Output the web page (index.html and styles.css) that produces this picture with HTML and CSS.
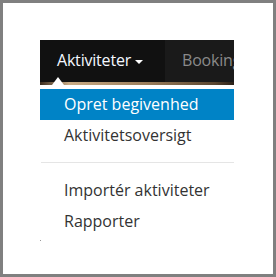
FILE: index.html
```html
<!DOCTYPE html>
<html lang="da">
  <head>
    <meta charset="UTF-8" />
    <title>Aktiviteter</title>
    <link rel="stylesheet" href="styles.css">
  </head>
  <body>
    <div class="frame">
      <div class="menu">
        <div class="navbar">
          <div class="nav-item active">Aktiviteter <span class="caret"></span></div>
          <div class="nav-item">Booking</div>
        </div>
        <div class="nav-edge"></div>
        <div class="dropdown">
          <span class="pointer"></span>
          <div class="dropdown-item selected">Opret begivenhed</div>
          <div class="dropdown-item">Aktivitetsoversigt</div>
          <div class="divider"></div>
          <div class="dropdown-item">Importér aktiviteter</div>
          <div class="dropdown-item">Rapporter</div>
          <span class="dot"></span>
        </div>
      </div>
    </div>
  </body>
</html>
```

FILE: styles.css
```css
body {
  margin: 0;
  padding: 0;
  background-color: #fff;
  font-family: "Open Sans", Arial, sans-serif;
}

.frame {
  box-sizing: border-box;
  width: 276px;
  height: 277px;
  border: 3px solid #808080;
  padding: 37px 0 0 37px;
}

.menu {
  width: 194px;
}

.navbar {
  display: flex;
  height: 42px;
  background-color: #111;
  overflow: hidden;
}

.nav-item {
  flex-shrink: 0;
  padding: 0 0 0 17px;
  line-height: 40px;
  font-size: 16px;
  letter-spacing: -0.2px;
  color: #8a8a8a;
  background-color: #1a1a1a;
  white-space: nowrap;
}

.nav-item.active {
  width: 108px;
  padding-left: 17px;
  color: #f4f8ff;
  background-color: #111;
}

.caret {
  display: inline-block;
  width: 0;
  height: 0;
  margin-left: 0;
  vertical-align: middle;
  border-top: 4px solid #fff;
  border-left: 4px solid transparent;
  border-right: 4px solid transparent;
}

.nav-edge {
  height: 3px;
  background: linear-gradient(to right, #3a2c1e, #c9ac86 15%, #9a7e5c 55%, #5a4630 90%, #2a2018);
}

.dropdown {
  position: relative;
  padding-top: 4px;
}

.pointer {
  position: absolute;
  top: -8px;
  left: 12px;
  width: 0;
  height: 0;
  border-bottom: 8px solid #fff;
  border-left: 6px solid transparent;
  border-right: 6px solid transparent;
}

.dropdown-item {
  padding-left: 24px;
  line-height: 31px;
  font-size: 16px;
  color: #333;
  white-space: nowrap;
}

.dropdown-item.selected {
  color: #fff;
  background-color: #0083c6;
}

.divider {
  height: 1px;
  margin: 11px 0 12px 1px;
  background-color: #e5e5e5;
}

.dot {
  display: block;
  width: 1px;
  height: 1px;
  margin-top: 3px;
  background-color: #999;
}
```
